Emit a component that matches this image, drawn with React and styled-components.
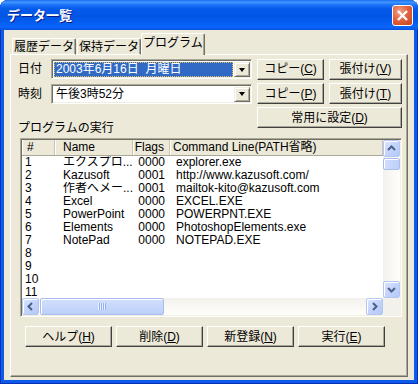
import React from "react";
import styled, { createGlobalStyle } from "styled-components";

const UI_FONT = `"Liberation Sans", "Noto Sans CJK JP", sans-serif`;

const GlobalStyle = createGlobalStyle`
  html, body {
    margin: 0;
    padding: 0;
    background: #ffffff;
  }
  body {
    font-family: ${UI_FONT};
    font-size: 12px;
    color: #000;
  }
  * { box-sizing: border-box; }
`;

// data
const rows = [
  ["1", "エクスプロ...", "0000", "explorer.exe"],
  ["2", "Kazusoft", "0001", "http://www.kazusoft.com/"],
  ["3", "作者へメー...", "0001", "mailtok-kito@kazusoft.com"],
  ["4", "Excel", "0000", "EXCEL.EXE"],
  ["5", "PowerPoint", "0000", "POWERPNT.EXE"],
  ["6", "Elements", "0000", "PhotoshopElements.exe"],
  ["7", "NotePad", "0000", "NOTEPAD.EXE"],
  ["8", "", "", ""],
  ["9", "", "", ""],
  ["10", "", "", ""],
  ["11", "", "", ""],
];

const Chevron = ({ dir }) => {
  const pts = {
    up: "1,6 4.5,2.5 8,6",
    down: "1,3 4.5,6.5 8,3",
    left: "6,1 2.5,4.5 6,8",
    right: "3,1 6.5,4.5 3,8",
  }[dir];
  return (
    <svg width="9" height="9" viewBox="0 0 9 9">
      <polyline points={pts} fill="none" stroke="#4D6185" strokeWidth="2" />
    </svg>
  );
};

const App = () => {
  return (
    <>
      <GlobalStyle />
      <Window>
        <TitleBar>
          <Title>データ一覧</Title>
          <CloseBtn>
            <svg width="13" height="13" viewBox="0 0 13 13">
              <path d="M2 2 L11 11 M11 2 L2 11" stroke="#fff" strokeWidth="2.4" />
            </svg>
          </CloseBtn>
        </TitleBar>
        <Client>
          <TabStrip>
            <Tab>履歴データ</Tab>
            <Tab>保持データ</Tab>
            <Tab $active>プログラム</Tab>
          </TabStrip>
          <Panel>
            <FormGrid>
              <FieldLabel>日付</FieldLabel>
              <Combo>
                <ComboValue>
                  <Selected>2003年6月16日  月曜日</Selected>
                </ComboValue>
                <DropBtn>
                  <DropArrow />
                </DropBtn>
              </Combo>
              <Button>
                コピー(<u>C</u>)
              </Button>
              <Button>
                張付け(<u>V</u>)
              </Button>

              <FieldLabel>時刻</FieldLabel>
              <Combo>
                <ComboValue>
                  <Plain>午後3時52分</Plain>
                </ComboValue>
                <DropBtn>
                  <DropArrow />
                </DropBtn>
              </Combo>
              <Button>
                コピー(<u>P</u>)
              </Button>
              <Button>
                張付け(<u>T</u>)
              </Button>

              <SectionLabel>プログラムの実行</SectionLabel>
              <WideButton>
                常用に設定(<u>D</u>)
              </WideButton>
            </FormGrid>

            <ListBox>
              <ListView>
                <HeaderRow>
                  <HeadCell $pad="5px">#</HeadCell>
                  <HeadCell $pad="8px">Name</HeadCell>
                  <HeadCell $pad="5px" $right>
                    Flags
                  </HeadCell>
                  <HeadCell $pad="3px">Command Line(PATH省略)</HeadCell>
                </HeaderRow>
                {rows.map((r, idx) => (
                  <ItemRow key={idx}>
                    <Cell $pad="3px">{r[0]}</Cell>
                    <Cell $pad="8px">{r[1]}</Cell>
                    <Cell $pad="5px" $right>
                      {r[2]}
                    </Cell>
                    <Cell $pad="6px">{r[3]}</Cell>
                  </ItemRow>
                ))}
              </ListView>

              <VScroll>
                <ScrollBtn>
                  <Chevron dir="up" />
                </ScrollBtn>
                <VThumb />
                <Track />
                <ScrollBtn>
                  <Chevron dir="down" />
                </ScrollBtn>
              </VScroll>

              <HScroll>
                <ScrollBtn>
                  <Chevron dir="left" />
                </ScrollBtn>
                <HThumb>
                  <Grip />
                </HThumb>
                <Track />
                <ScrollBtn>
                  <Chevron dir="right" />
                </ScrollBtn>
              </HScroll>
              <Corner />
            </ListBox>

            <ButtonRow>
              <FootButton>
                ヘルプ(<u>H</u>)
              </FootButton>
              <FootButton>
                削除(<u>D</u>)
              </FootButton>
              <FootButton>
                新登録(<u>N</u>)
              </FootButton>
              <FootButton>
                実行(<u>E</u>)
              </FootButton>
            </ButtonRow>
          </Panel>
        </Client>
      </Window>
    </>
  );
};

// Window frame

const Window = styled.div`
  width: 418px;
  height: 384px;
  display: flex;
  flex-direction: column;
  background: #0b5be8;
  border-radius: 8px 8px 0 0;
  overflow: hidden;
  box-shadow: inset 1px 0 0 #0a2fb8, inset -1px 0 0 #0a2fb8,
    inset 0 -1px 0 #0a2fb8;
`;

const TitleBar = styled.div`
  height: 30px;
  flex: none;
  display: flex;
  align-items: center;
  justify-content: space-between;
  padding: 0 5px 0 7px;
  background: linear-gradient(
    180deg,
    #1f6ff2 0%,
    #3d95ff 8%,
    #1d74f8 16%,
    #0559ea 30%,
    #0055e5 55%,
    #0660f4 80%,
    #0a66fb 90%,
    #0751de 100%
  );
`;

const Title = styled.div`
  font-family: "Noto Sans CJK JP", sans-serif;
  font-weight: 700;
  font-size: 13px;
  line-height: 16px;
  color: #ffffff;
  text-shadow: 1px 1px 0 #0c1a8a;
`;

const CloseBtn = styled.div`
  width: 21px;
  height: 21px;
  margin-top: 1px;
  border: 1px solid #ffffff;
  border-radius: 3px;
  display: flex;
  align-items: center;
  justify-content: center;
  background: radial-gradient(
    circle at 35% 30%,
    #f0a58a 0%,
    #e2643f 45%,
    #c8401c 100%
  );
`;

const Client = styled.div`
  flex: 1;
  margin: 0 4px 4px 4px;
  padding: 4px 6px 3px 6px;
  background: #ece9d8;
  display: flex;
  flex-direction: column;
`;

// Tabs

const TabStrip = styled.div`
  height: 21px;
  flex: none;
  display: flex;
  align-items: flex-end;
  padding-left: 2px;
  margin-bottom: -1px;
  position: relative;
  z-index: 1;
`;

const Tab = styled.div`
  height: ${(p) => (p.$active ? "22px" : "17px")};
  margin: ${(p) => (p.$active ? "0 -1px 0 -1px" : "0 1px 0 0")};
  padding: ${(p) => (p.$active ? "2px 1px 0 1px" : "1px 1px 0 1px")};
  background: #ece9d8;
  border-top: 1px solid #ffffff;
  border-left: 1px solid #ffffff;
  border-right: 1px solid #716f64;
  border-bottom: ${(p) => (p.$active ? "none" : "1px solid #ffffff")};
  border-radius: 2px 2px 0 0;
  box-shadow: inset -1px 0 0 #aca899;
  font-size: 12px;
  line-height: 14px;
  white-space: nowrap;
  position: relative;
  z-index: ${(p) => (p.$active ? 2 : 0)};
`;

const Panel = styled.div`
  flex: 1;
  border-top: 1px solid #ffffff;
  border-left: 1px solid #ffffff;
  border-right: 1px solid #716f64;
  border-bottom: 1px solid #716f64;
  box-shadow: inset -1px -1px 0 #aca899;
  padding: 3px 5px 0 7px;
  display: flex;
  flex-direction: column;
`;

// Form part

const FormGrid = styled.div`
  display: grid;
  grid-template-columns: 28px 201px 67px 73px;
  grid-template-rows: 22px 21px auto;
  column-gap: 5px;
  row-gap: 3px;
  align-items: center;
`;

const FieldLabel = styled.div`
  font-size: 12px;
  line-height: 14px;
`;

const SectionLabel = styled.div`
  grid-column: 1 / 3;
  grid-row: 3;
  align-self: end;
  padding-top: 15px;
  font-size: 12px;
  line-height: 13px;
`;

const Combo = styled.div`
  height: 20px;
  display: flex;
  background: #ffffff;
  border-top: 1px solid #aca899;
  border-left: 1px solid #aca899;
  border-right: 1px solid #ffffff;
  border-bottom: 1px solid #ffffff;
  box-shadow: inset 1px 1px 0 #716f64, inset -1px -1px 0 #f1efe2;
  padding: 2px 1px 1px 2px;
`;

const ComboValue = styled.div`
  flex: 1;
  display: flex;
  padding-right: 1px;
`;

const Selected = styled.div`
  flex: 1;
  background: #316ac5;
  color: #ffffff;
  outline: 1px dotted #e8c060;
  outline-offset: -1px;
  padding-left: 2px;
  font-size: 12px;
  line-height: 14px;
  white-space: pre;
`;

const Plain = styled.div`
  flex: 1;
  padding-left: 2px;
  font-size: 12px;
  line-height: 14px;
  white-space: pre;
`;

const DropBtn = styled.div`
  width: 16px;
  background: #ece9d8;
  border-top: 1px solid #f1efe2;
  border-left: 1px solid #f1efe2;
  border-right: 1px solid #716f64;
  border-bottom: 1px solid #716f64;
  box-shadow: inset 1px 1px 0 #ffffff, inset -1px -1px 0 #aca899;
  display: flex;
  align-items: center;
  justify-content: center;
`;

const DropArrow = styled.div`
  width: 0;
  height: 0;
  border-left: 3.5px solid transparent;
  border-right: 3.5px solid transparent;
  border-top: 4px solid #000000;
`;

const Button = styled.div`
  height: 21px;
  display: flex;
  align-items: center;
  justify-content: center;
  background: #ece9d8;
  border-top: 1px solid #ffffff;
  border-left: 1px solid #ffffff;
  border-right: 1px solid #404040;
  border-bottom: 1px solid #404040;
  box-shadow: inset -1px -1px 0 #aca899;
  font-size: 12px;
  line-height: 14px;
  white-space: nowrap;

  u {
    text-underline-offset: 1px;
  }
`;

const WideButton = styled(Button)`
  grid-column: 3 / 5;
  grid-row: 3;
  align-self: start;
`;

// List view

const ListBox = styled.div`
  margin: 3px 0 0 2px;
  width: 382px;
  height: 179px;
  flex: none;
  display: grid;
  grid-template-columns: 1fr 17px;
  grid-template-rows: 1fr 17px;
  background: #ffffff;
  border-top: 1px solid #aca899;
  border-left: 1px solid #aca899;
  border-right: 1px solid #ffffff;
  border-bottom: 1px solid #ffffff;
  box-shadow: inset 1px 1px 0 #716f64, inset -1px -1px 0 #f1efe2;
  padding: 1px;
`;

const ListView = styled.div`
  overflow: hidden;
  min-width: 0;
  min-height: 0;
`;

const HeaderRow = styled.div`
  display: grid;
  grid-template-columns: 33px 78px 37px 1fr;
  height: 16px;
  background: #ece9d8;
  border-bottom: 1px solid #aca899;
`;

const HeadCell = styled.div`
  padding: 0 ${(p) => (p.$right ? p.$pad : "0")} 0
    ${(p) => (p.$right ? "0" : p.$pad)};
  text-align: ${(p) => (p.$right ? "right" : "left")};
  border-right: 1px solid #c7c5b2;
  box-shadow: inset 1px 0 0 #ffffff;
  font-size: 12px;
  line-height: 15px;
  white-space: nowrap;
  overflow: hidden;
`;

const ItemRow = styled.div`
  display: grid;
  grid-template-columns: 33px 78px 37px 1fr;
  height: 13px;
`;

const Cell = styled.div`
  padding: 0 ${(p) => (p.$right ? p.$pad : "0")} 0
    ${(p) => (p.$right ? "0" : p.$pad)};
  text-align: ${(p) => (p.$right ? "right" : "left")};
  font-size: 12px;
  line-height: 13px;
  white-space: nowrap;
  overflow: hidden;
`;

// Scrollbars

const VScroll = styled.div`
  display: flex;
  flex-direction: column;
  background: linear-gradient(90deg, #f3f1ec, #fefefb);
`;

const HScroll = styled.div`
  display: flex;
  background: linear-gradient(180deg, #f3f1ec, #fefefb);
`;

const ScrollBtn = styled.div`
  width: 17px;
  height: 17px;
  flex: none;
  display: flex;
  align-items: center;
  justify-content: center;
  border: 1px solid #b4c7f2;
  border-radius: 2px;
  background: linear-gradient(135deg, #dce6fe 0%, #c3d4fc 50%, #b4c9f8 100%);
  box-shadow: inset 1px 1px 0 #ffffff;
`;

const Track = styled.div`
  flex: 1;
`;

const VThumb = styled.div`
  height: 12px;
  margin-top: 1px;
  flex: none;
  border: 1px solid #a9bdec;
  border-radius: 2px;
  background: linear-gradient(90deg, #d1defd, #bccff9);
  box-shadow: inset 1px 1px 0 #ffffff;
`;

const HThumb = styled.div`
  width: 124px;
  margin-left: 1px;
  flex: none;
  display: flex;
  align-items: center;
  justify-content: center;
  border: 1px solid #a9bdec;
  border-radius: 2px;
  background: linear-gradient(180deg, #d3e0fd, #bccff9);
  box-shadow: inset 1px 1px 0 #ffffff;
`;

const Grip = styled.div`
  width: 8px;
  height: 7px;
  background: repeating-linear-gradient(
    90deg,
    #eef4fe 0px,
    #eef4fe 1px,
    #8cb0f8 1px,
    #8cb0f8 2px
  );
`;

const Corner = styled.div`
  background: #f3f1ec;
`;

// footer buttons

const ButtonRow = styled.div`
  display: flex;
  gap: 4px;
  margin-top: 9px;
  padding-left: 7px;
`;

const FootButton = styled(Button)`
  width: 87px;
`;

export default App;
